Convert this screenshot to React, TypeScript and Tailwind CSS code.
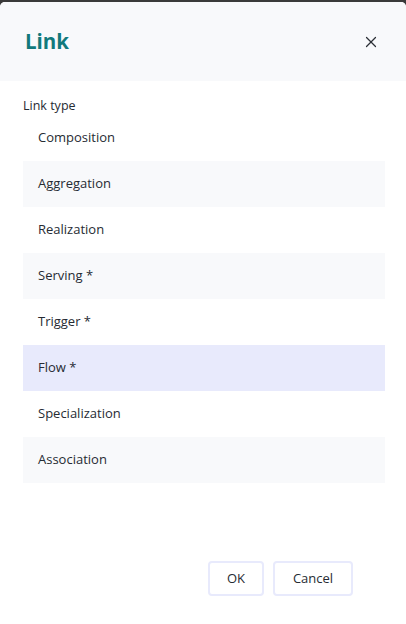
import { X } from 'lucide-react'

const linkTypes = [
  'Composition',
  'Aggregation',
  'Realization',
  'Serving *',
  'Trigger *',
  'Flow *',
  'Specialization',
  'Association',
]

export default function App() {
  const selected = 'Flow *'

  return (
    <div
      className="h-[624px] w-[406px] bg-[#3a3a3a] pt-[2px]"
      style={{ fontFamily: '"Open Sans", "Noto Sans", sans-serif' }}
    >
      <div className="flex h-[622px] flex-col overflow-hidden rounded-t-[5px] bg-white">
        {/* Header */}
        <div className="flex h-[79px] shrink-0 items-center justify-between bg-[#f8f9fb] pl-[25px] pr-[26px]">
          <h1 className="text-[20.5px] font-bold text-[#11797c]">Link</h1>
          <button type="button" className="text-[#2b2f36]">
            <X size={18} strokeWidth={1.6} />
          </button>
        </div>

        {/* Body */}
        <div className="flex-1 pl-[23px] pr-[21px] pt-[16px]">
          <div className="text-[12.5px] font-medium leading-[18px] text-[#262b33]">Link type</div>
          <ul>
            {linkTypes.map((t, i) => (
              <li
                key={t}
                className={
                  'flex h-[46px] items-center pl-[15px] text-[13px] font-medium text-[#262b33] ' +
                  (t === selected ? 'bg-[#e8eafc]' : i % 2 === 1 ? 'bg-[#f8f9fb]' : 'bg-white')
                }
              >
                {t}
              </li>
            ))}
          </ul>
        </div>

        {/* Footer */}
        <div className="flex shrink-0 justify-end gap-[9px] pb-[28px] pr-[53px]">
          <button
            type="button"
            className="h-[35px] w-[56px] rounded-[4px] border-2 border-[#e8eafc] text-[13px] font-medium text-[#262b33]"
          >
            OK
          </button>
          <button
            type="button"
            className="h-[35px] w-[80px] rounded-[4px] border-2 border-[#e8eafc] text-[13px] font-medium text-[#262b33]"
          >
            Cancel
          </button>
        </div>
      </div>
    </div>
  )
}
